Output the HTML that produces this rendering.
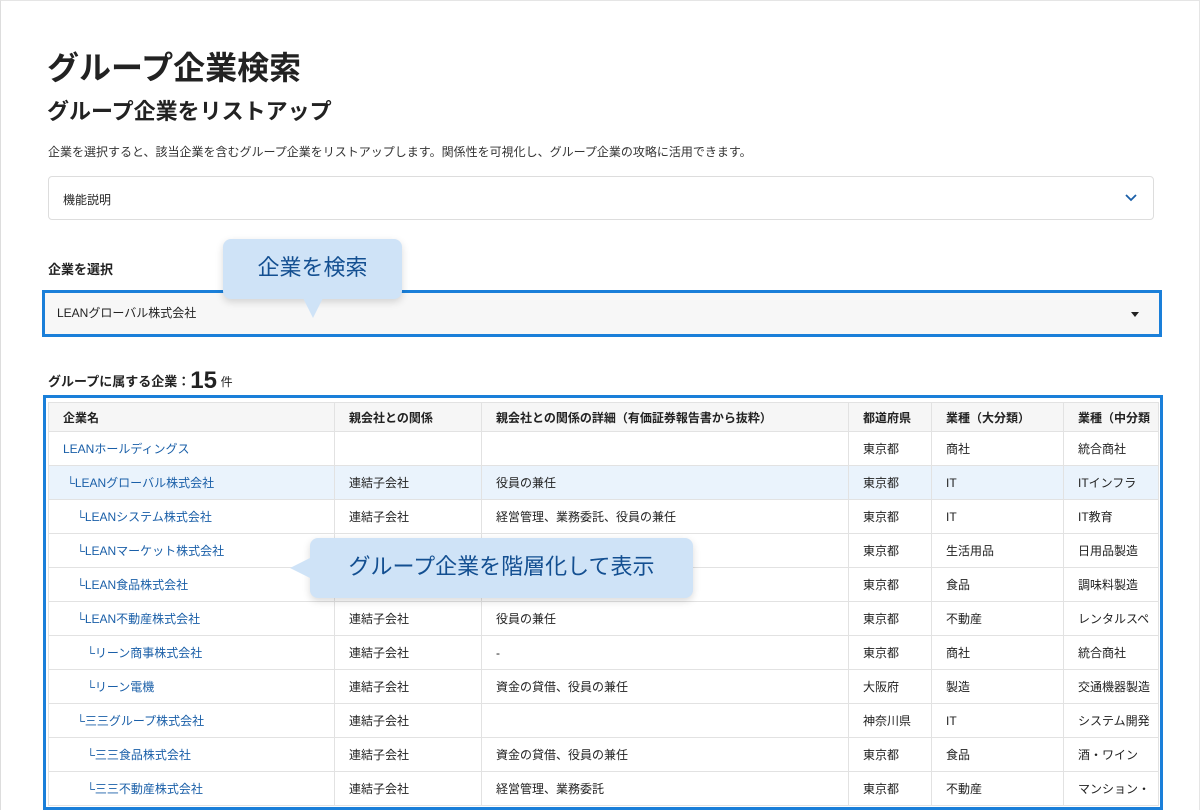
<!DOCTYPE html>
<html><head><meta charset="utf-8"><style>
*{box-sizing:border-box;margin:0;padding:0}
body{width:1200px;height:810px;overflow:hidden;background:#fff;font-family:"Liberation Sans","Noto Sans CJK JP",sans-serif;color:#222;position:relative;border-left:1px solid #ddd;border-top:1px solid #e5e5e5;border-right:1px solid #e5e5e5}
.a{position:absolute}
h1{position:absolute;left:46px;top:42px;font-size:32px;font-weight:700}
h2{position:absolute;left:46px;top:93px;font-size:22px;font-weight:700}
.desc{left:47px;top:142px;font-size:12px;color:#333}
.acc{left:47px;top:175px;width:1106px;height:44px;border:1px solid #ddd;border-radius:4px;font-size:12px;padding:14px 14px}
.lbl{font-size:13px;font-weight:700}
.sel{left:41px;top:289px;width:1120px;height:47px;border:3px solid #1a7fd9;background:#f7f7f7;font-size:12px;padding:11px 12px}
table{position:absolute;left:47px;top:401px;border-collapse:collapse;font-size:12px;table-layout:fixed;width:1110px}
td,th{border:1px solid #e2e2e2;height:34px;padding:0 14px;white-space:nowrap;overflow:hidden;text-align:left}
th{height:29px;background:#f6f6f6;font-weight:700}
td.n{color:#1a5fa8}
tr.h td{background:#eaf3fc}
.frame{left:42px;top:394px;width:1120px;height:415px;border:3px solid #1a7fd9}
.co{background:#cfe3f7;color:#134f91;font-weight:400;border-radius:8px;box-shadow:0 3px 8px rgba(0,0,0,.15);text-align:center}
</style></head><body>
<h1>グループ企業検索</h1>
<h2>グループ企業をリストアップ</h2>
<div class="a desc">企業を選択すると、該当企業を含むグループ企業をリストアップします。関係性を可視化し、グループ企業の攻略に活用できます。</div>
<div class="a acc">機能説明<svg class="a" style="right:16px;top:16px" width="12" height="10" viewBox="0 0 12 10"><path d="M1 2l5 5 5-5" stroke="#1a5fa8" stroke-width="1.8" fill="none"/></svg></div>
<div class="a lbl" style="left:47px;top:258px">企業を選択</div>
<div class="a sel">LEANグローバル株式会社<div class="a" style="right:20px;top:19px;border:4px solid transparent;border-top:5px solid #222"></div></div>
<div class="a lbl" style="left:47px;top:366px">グループに属する企業：<span style="font-size:24px;vertical-align:-2px">15</span> <span style="font-size:12px;font-weight:400">件</span></div>
<table>
<colgroup><col style="width:286px"><col style="width:147px"><col style="width:367px"><col style="width:83px"><col style="width:132px"><col style="width:95px"></colgroup>
<tr><th>企業名</th><th>親会社との関係</th><th>親会社との関係の詳細（有価証券報告書から抜粋）</th><th>都道府県</th><th>業種（大分類）</th><th>業種（中分類</th></tr>
<tr><td class="n">LEANホールディングス</td><td></td><td></td><td>東京都</td><td>商社</td><td>統合商社</td></tr>
<tr class="h"><td class="n">&nbsp;└LEANグローバル株式会社</td><td>連結子会社</td><td>役員の兼任</td><td>東京都</td><td>IT</td><td>ITインフラ</td></tr>
<tr><td class="n">&nbsp;&nbsp;&nbsp;&nbsp;└LEANシステム株式会社</td><td>連結子会社</td><td>経営管理、業務委託、役員の兼任</td><td>東京都</td><td>IT</td><td>IT教育</td></tr>
<tr><td class="n">&nbsp;&nbsp;&nbsp;&nbsp;└LEANマーケット株式会社</td><td>連結子会社</td><td></td><td>東京都</td><td>生活用品</td><td>日用品製造</td></tr>
<tr><td class="n">&nbsp;&nbsp;&nbsp;&nbsp;└LEAN食品株式会社</td><td>連結子会社</td><td></td><td>東京都</td><td>食品</td><td>調味料製造</td></tr>
<tr><td class="n">&nbsp;&nbsp;&nbsp;&nbsp;└LEAN不動産株式会社</td><td>連結子会社</td><td>役員の兼任</td><td>東京都</td><td>不動産</td><td>レンタルスペ</td></tr>
<tr><td class="n">&nbsp;&nbsp;&nbsp;&nbsp;&nbsp;&nbsp;&nbsp;└リーン商事株式会社</td><td>連結子会社</td><td>-</td><td>東京都</td><td>商社</td><td>統合商社</td></tr>
<tr><td class="n">&nbsp;&nbsp;&nbsp;&nbsp;&nbsp;&nbsp;&nbsp;└リーン電機</td><td>連結子会社</td><td>資金の貸借、役員の兼任</td><td>大阪府</td><td>製造</td><td>交通機器製造</td></tr>
<tr><td class="n">&nbsp;&nbsp;&nbsp;&nbsp;└三三グループ株式会社</td><td>連結子会社</td><td></td><td>神奈川県</td><td>IT</td><td>システム開発</td></tr>
<tr><td class="n">&nbsp;&nbsp;&nbsp;&nbsp;&nbsp;&nbsp;&nbsp;└三三食品株式会社</td><td>連結子会社</td><td>資金の貸借、役員の兼任</td><td>東京都</td><td>食品</td><td>酒・ワイン</td></tr>
<tr><td class="n">&nbsp;&nbsp;&nbsp;&nbsp;&nbsp;&nbsp;&nbsp;└三三不動産株式会社</td><td>連結子会社</td><td>経営管理、業務委託</td><td>東京都</td><td>不動産</td><td>マンション・</td></tr>
</table>
<div class="a frame"></div>
<div class="a co" style="left:222px;top:238px;width:179px;height:60px;font-size:22px;line-height:58px">企業を検索</div>
<div class="a" style="left:302px;top:297px;border:10px solid transparent;border-top:20px solid #cfe3f7;border-bottom:0"></div>
<div class="a co" style="left:309px;top:537px;width:383px;height:60px;font-size:22px;line-height:58px">グループ企業を階層化して表示</div>
<div class="a" style="left:289px;top:557px;border:10px solid transparent;border-right:20px solid #cfe3f7;border-left:0"></div>
</body></html>
